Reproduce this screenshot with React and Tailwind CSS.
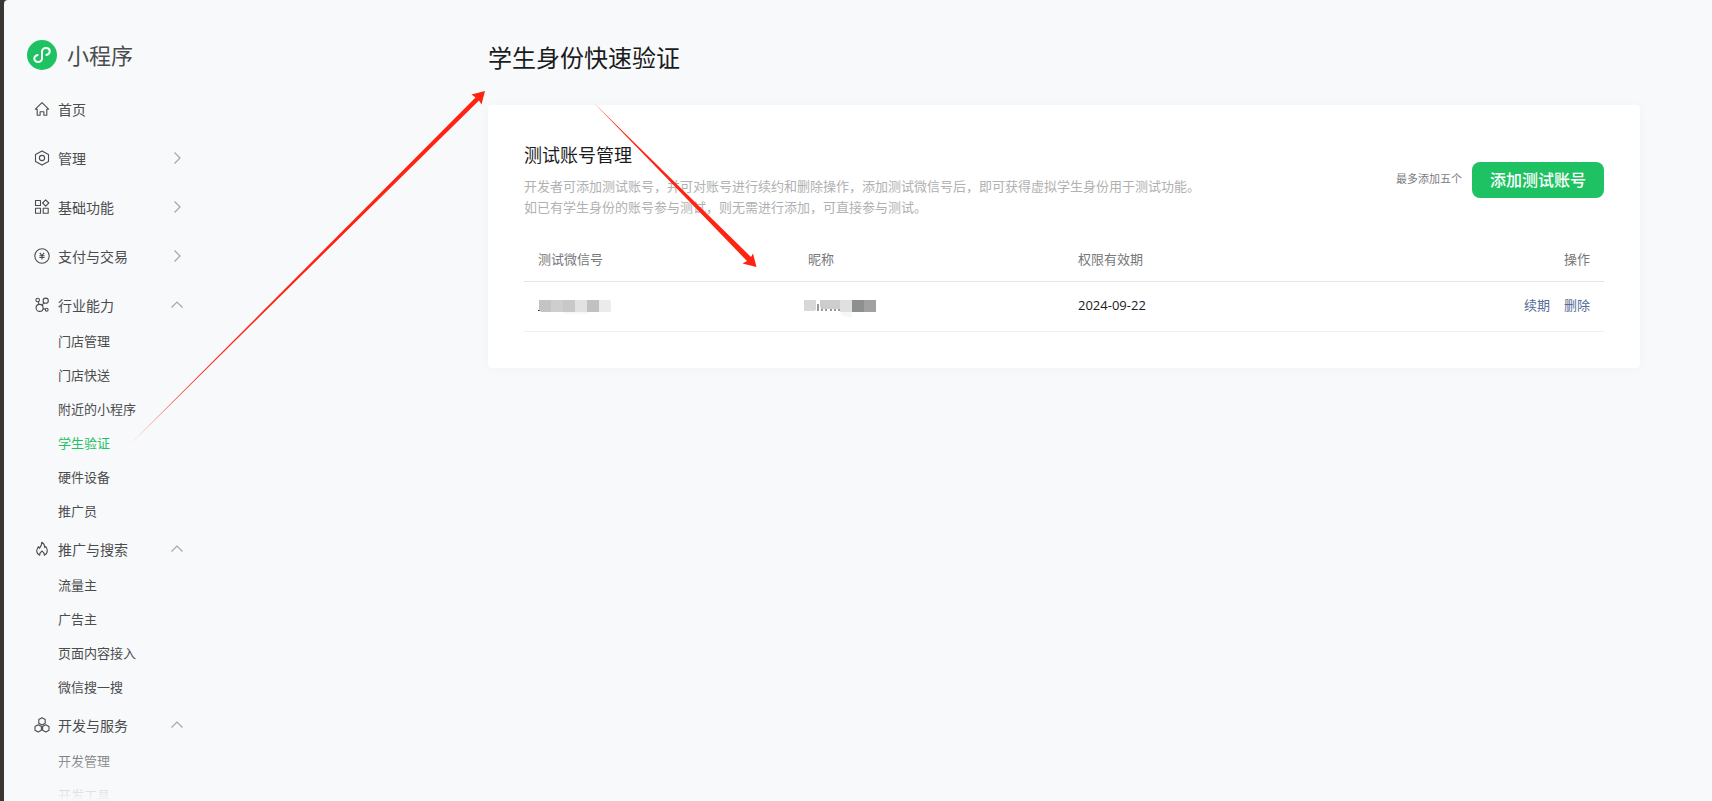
import React from "react";

// ================= ICONS =================

const iconProps = {
  width: 16,
  height: 16,
  viewBox: "0 0 16 16",
  fill: "none",
  stroke: "currentColor",
  strokeWidth: 1.1,
  strokeLinejoin: "round",
  "aria-hidden": true,
};

const HomeIcon = () => (
  <svg {...iconProps}>
    <path d="M3.200 8.200H1.400L8 1.700l6.600 6.500h-1.800v6.100H9.900v-3.500H6.100v3.500H3.200Z" />
  </svg>
);

const ManageIcon = () => (
  <svg {...iconProps}>
    <path d="M8 .9 14.500 4.400v7.200L8 15.100 1.500 11.600V4.400Z" />
    <circle cx="8" cy="8" r="2.600" />
  </svg>
);

const GridIcon = () => (
  <svg {...iconProps}>
    <rect x="1.500" y="1.500" width="5" height="5" />
    <rect x="1.500" y="9.300" width="5" height="5" />
    <rect x="9.200" y="9.300" width="5" height="5" />
    <path d="m11.700.9 3.100 3.100-3.100 3.100L8.600 4Z" />
  </svg>
);

const PayIcon = () => (
  <svg {...iconProps}>
    <circle cx="8" cy="8" r="7.200" />
    <path d="m5.800 4.800 2.200 2.700 2.200-2.700M8 7.500v4M5.400 7.700h5.200M5.400 9.500h5.200" />
  </svg>
);

const IndustryIcon = () => (
  <svg {...iconProps}>
    <circle cx="3.700" cy="3" r="1.800" />
    <circle cx="11.700" cy="3.700" r="2.600" />
    <circle cx="5.600" cy="10.900" r="3.500" />
    <circle cx="12.700" cy="12.700" r="1.400" />
    <path d="m4.300 4.800.6 2.600M10 5.700 8 8.300M9 11.600l2.300.7" />
  </svg>
);

const FireIcon = () => (
  <svg {...iconProps}>
    <path d="M5.700 14.200C3.700 13.300 2.700 11.700 2.700 9.800c0-2 1-3.100 1.900-4.100l.9 1.600C7 5.600 7.700 3.700 7.800 1.300c2 1.200 2.900 3.100 3 5.300l1-.9c1 1.200 1.500 2.500 1.500 4.100 0 2-1 3.500-3 4.400 .3-1.700-.7-3-2.300-4.200-1.600 1.200-2.600 2.500-2.300 4.200Z" />
  </svg>
);

const DevIcon = () => (
  <svg {...iconProps}>
    <path d="m8 .8 3.200 1.800v3.600L8 8 4.800 6.200V2.600ZM4.200 7.800l3.200 1.800v3.600L4.200 15 1 13.200V9.600ZM11.800 7.800 15 9.600v3.600L11.800 15l-3.200-1.800V9.600Z" />
  </svg>
);

const Chevron = ({ open }) => (
  <svg
    width="14"
    height="14"
    viewBox="0 0 14 14"
    fill="none"
    stroke="currentColor"
    strokeWidth="1.2"
    className="text-[#a5a6a8]"
    aria-hidden="true"
  >
    <path d={open ? "M1.500 9.500 7 4l5.500 5.500" : "M4.500 1.500 10 7l-5.500 5.500"} />
  </svg>
);

// ================= DATA =================

const menus = [
  { name: "首页", icon: HomeIcon },
  { name: "管理", icon: ManageIcon, expandable: true },
  { name: "基础功能", icon: GridIcon, expandable: true },
  { name: "支付与交易", icon: PayIcon, expandable: true },
  {
    name: "行业能力",
    icon: IndustryIcon,
    expandable: true,
    children: [
      "门店管理",
      "门店快送",
      "附近的小程序",
      "学生验证",
      "硬件设备",
      "推广员",
    ],
  },
  {
    name: "推广与搜索",
    icon: FireIcon,
    expandable: true,
    children: ["流量主", "广告主", "页面内容接入", "微信搜一搜"],
  },
  {
    name: "开发与服务",
    icon: DevIcon,
    expandable: true,
    children: ["开发管理", "开发工具"],
  },
];

const activeItem = "学生验证";

// ================= SIDEBAR =================

function Sidebar() {
  return (
    <aside className="relative w-[212px] h-screen shrink-0 overflow-hidden pl-[23px] pt-10 text-[#4b4c4e]">
      <div className="flex items-center gap-[10px] h-[30px]">
        <svg width="30" height="30" viewBox="0 0 30 30" aria-hidden="true">
          <circle cx="15" cy="15" r="15" fill="#1ec263" />
          <path
            d="M10.600 15c-2 .5-3.300 1.800-3.300 3.500 0 1.900 1.700 3.400 3.800 3.400s3.900-1.500 3.900-3.500v-6.800c0-2 1.700-3.500 3.900-3.500s3.800 1.500 3.800 3.400c0 1.700-1.300 3-3.300 3.500"
            fill="none"
            stroke="#fff"
            strokeWidth="2"
            strokeLinecap="round"
          />
        </svg>
        <span className="text-[22px] leading-7 pb-[2px]">小程序</span>
      </div>

      <nav className="mt-5">
        {menus.map(({ name, icon: Icon, expandable, children }) => (
          <div key={name} className={children ? "pb-[2px]" : "pb-[11px]"}>
            <button
              type="button"
              className="flex items-center w-[157px] h-[38px] pl-[7px] text-sm"
            >
              <Icon />
              <span className="ml-2">{name}</span>
              {expandable && (
                <span className="ml-auto">
                  <Chevron open={Boolean(children)} />
                </span>
              )}
            </button>

            {children && (
              <ul>
                {children.map((child) => (
                  <li key={child}>
                    <a
                      href="#"
                      className={`block h-[34px] pl-[31px] text-[13px] leading-[34px] ${
                        child === activeItem ? "text-[#1ec263]" : ""
                      }`}
                    >
                      {child}
                    </a>
                  </li>
                ))}
              </ul>
            )}
          </div>
        ))}
      </nav>

      {/* BOTTOM FADE */}
      <div className="absolute inset-x-0 bottom-0 h-16 bg-linear-to-t from-[#f8f9fb] to-transparent pointer-events-none" />
    </aside>
  );
}

// ================= MASKED VALUES =================

const MaskedAccount = () => (
  <svg width="74" height="16" viewBox="0 0 74 16" role="img" aria-label="已隐藏">
    <path d="M0 12h3v1H0z" fill="#222" />
    <path d="M26 14h24v2H26z" fill="#f7f7f7" />
    <path d="M1 2h12v12H3L1 12z" fill="#c4c4c4" />
    <path d="M13 2h12v12H13z" fill="#cecece" />
    <path d="M25 2h12v12H25z" fill="#c8c8c8" />
    <path d="M37 2h12v12H37z" fill="#e2e2e2" />
    <path d="M49 2h12v12H49z" fill="#c1c1c1" />
    <path d="M61 2h11l1 2v10H61z" fill="#ebebeb" />
  </svg>
);

const MaskedName = () => (
  <svg
    width="74"
    height="16"
    viewBox="0 0 74 16"
    className="overflow-visible"
    role="img"
    aria-label="已隐藏"
  >
    <path
      d="M14 6v7M18 10v3M22 11v2M27 11v2M31 11v2M35 11v2"
      stroke="#333"
      strokeWidth="1"
    />
    <path d="M0 2h12v10l-2 1H0z" fill="#d8d8d8" />
    <path d="M16 2h20v9H18l-2-2z" fill="#cdcdcd" />
    <path d="M37 14h11v5h-7l-4-3z" fill="#f7f7f7" />
    <path d="M36 2h12v12H36z" fill="#dfe1e0" />
    <path d="M48 2h12v12H48z" fill="#8e908f" />
    <path d="M60 2h12v12H60z" fill="#a1a1a1" />
  </svg>
);

// ================= PAGE =================

function App() {
  return (
    <div className="relative min-h-screen bg-[#3a3633] pl-1 font-['Noto_Sans_CJK_SC',sans-serif]">
      <div className="flex min-h-screen rounded-tl-sm bg-[#f8f9fb]">
        <Sidebar />

        <main className="flex-1 min-w-0 pt-[39px] pr-[72px] pl-[272px]">
          <h1 className="text-2xl leading-9 text-[#1a1b1c]">学生身份快速验证</h1>

          <section className="mt-[30px] rounded bg-white px-9 pt-[35px] pb-9 shadow-[0_1px_12px_rgba(0,0,0,0.03)]">
            {/* CARD HEADER */}
            <div className="flex items-center justify-between">
              <div className="pb-[3px]">
                <h2 className="text-lg leading-7 text-[#1a1b1c]">测试账号管理</h2>
                <p className="mt-[7px] text-[13px] leading-[21px] text-[#b0b1b2]">
                  开发者可添加测试账号，并可对账号进行续约和删除操作，添加测试微信号后，即可获得虚拟学生身份用于测试功能。
                  <br />
                  如已有学生身份的账号参与测试，则无需进行添加，可直接参与测试。
                </p>
              </div>

              <div className="flex shrink-0 items-center gap-[10px]">
                <span className="pb-[3px] text-[11px] text-[#7c7d7e]">最多添加五个</span>
                <button
                  type="button"
                  className="h-9 rounded-lg bg-[#1ec263] px-[18px] pb-[2px] text-base font-medium text-white"
                >
                  添加测试账号
                </button>
              </div>
            </div>

            {/* ACCOUNT TABLE */}
            <table className="mt-[19px] w-full table-fixed text-left text-[13px]">
              <thead className="text-[#76777a]">
                <tr className="h-[42px] border-b border-[#e4e5e6]">
                  <th className="px-[14px] pb-[2px] font-normal">测试微信号</th>
                  <th className="px-[14px] pb-[2px] font-normal">昵称</th>
                  <th className="px-[14px] pb-[2px] font-normal">权限有效期</th>
                  <th className="px-[14px] pb-[2px] text-right font-normal">操作</th>
                </tr>
              </thead>
              <tbody>
                <tr className="h-[50px] border-b border-[#f0f0f1]">
                  <td className="px-[14px]">
                    <MaskedAccount />
                  </td>
                  <td className="px-[10px]">
                    <MaskedName />
                  </td>
                  <td className="px-[14px] font-['Open_Sans',sans-serif] text-[#1a1b1c]">
                    2024-09-22
                  </td>
                  <td className="px-[14px] pb-[2px] text-right text-[#576b95]">
                    <a href="#">续期</a>
                    <a href="#" className="ml-[14px]">
                      删除
                    </a>
                  </td>
                </tr>
              </tbody>
            </table>
          </section>
        </main>
      </div>

      {/* ANNOTATION ARROWS */}
      <svg
        className="absolute top-0 left-0 pointer-events-none"
        width="800"
        height="460"
        viewBox="0 0 800 460"
        fill="#ff2312"
        aria-hidden="true"
      >
        <path d="M131 443.500 475.500 97.500 471.500 94.500 485 91 481.500 104.500 479 100.500Z" />
        <path d="M594 103 751 257 753 253.500 756.500 267 742.500 263.500 747 261Z" />
      </svg>
    </div>
  );
}

export default App;
